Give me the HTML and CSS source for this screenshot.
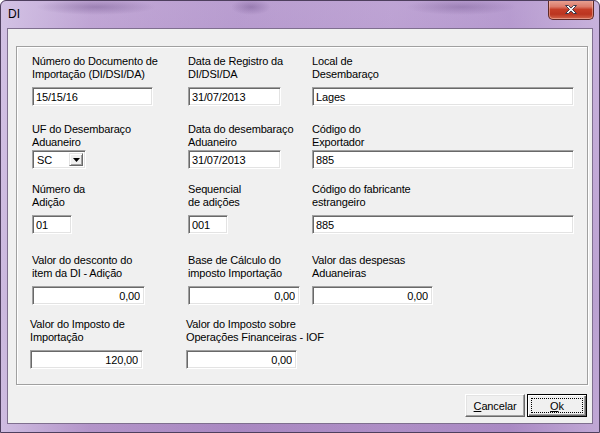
FILE: index.html
```html
<!DOCTYPE html>
<html lang="pt">
	<head>
		<meta charset="UTF-8" />
		<title>DI</title>
		<link rel="stylesheet" href="styles.css">
	</head>
	<body>
		<div class="window">
			<div class="titlebar">
				<span class="title">DI</span>
				<button class="close-btn" title="Fechar">
					<svg width="14" height="11" viewBox="0 0 14 11">
						<path d="M1.5 1.5h3l2.5 2.6 2.5-2.6h3l-4 4 4 4h-3l-2.5-2.6-2.5 2.6h-3l4-4z" fill="#fff" stroke="#3a3a4a" stroke-width="1" stroke-linejoin="round" />
					</svg>
				</button>
			</div>

			<div class="client">
				<div class="group">
					<div class="row row-1">
						<div class="field col-1">
							<label>Número do Documento de<br />Importação (DI/DSI/DA)</label>
							<input type="text" class="w-121" value="15/15/16" />
						</div>
						<div class="field col-2">
							<label>Data de Registro da<br />DI/DSI/DA</label>
							<input type="text" class="w-93" value="31/07/2013" />
						</div>
						<div class="field col-3">
							<label>Local de<br />Desembaraço</label>
							<input type="text" class="w-262" value="Lages" />
						</div>
					</div>

					<div class="row row-2">
						<div class="field col-1">
							<label>UF do Desembaraço<br />Aduaneiro</label>
							<div class="combo">
								<span class="combo-value">SC</span>
								<span class="combo-btn">
									<svg width="7" height="4" viewBox="0 0 7 4"><path d="M0 0h7L3.5 4z" fill="#000" /></svg>
								</span>
							</div>
						</div>
						<div class="field col-2">
							<label>Data do desembaraço<br />Aduaneiro</label>
							<input type="text" class="w-93" value="31/07/2013" />
						</div>
						<div class="field col-3">
							<label>Código do<br />Exportador</label>
							<input type="text" class="w-262" value="885" />
						</div>
					</div>

					<div class="row row-3">
						<div class="field col-1">
							<label>Número da<br />Adição</label>
							<input type="text" class="w-40" value="01" />
						</div>
						<div class="field col-2">
							<label>Sequencial<br />de adições</label>
							<input type="text" class="w-40" value="001" />
						</div>
						<div class="field col-3">
							<label>Código do fabricante<br />estrangeiro</label>
							<input type="text" class="w-262" value="885" />
						</div>
					</div>

					<div class="row row-4">
						<div class="field col-1">
							<label>Valor do desconto do<br />item da DI - Adição</label>
							<input type="text" class="w-113 num" value="0,00" />
						</div>
						<div class="field col-2">
							<label>Base de Cálculo do<br />imposto Importação</label>
							<input type="text" class="w-112 num" value="0,00" />
						</div>
						<div class="field col-3">
							<label>Valor das despesas<br />Aduaneiras</label>
							<input type="text" class="w-121 num" value="0,00" />
						</div>
					</div>

					<div class="row row-5">
						<div class="field col-1">
							<label>Valor do Imposto de<br />Importação</label>
							<input type="text" class="w-113 num" value="120,00" />
						</div>
						<div class="field col-2">
							<label>Valor do Imposto sobre<br />Operações Financeiras - IOF</label>
							<input type="text" class="w-111 num" value="0,00" />
						</div>
					</div>
				</div>

				<div class="actions">
					<button class="btn"><u>C</u>ancelar</button>
					<button class="btn default"><span class="focus"><u>O</u>k</span></button>
				</div>
			</div>
		</div>
	</body>
</html>
```

FILE: styles.css
```css
body {
	margin: 0;
	font-family: "Liberation Sans", Arial, sans-serif;
	font-size: 11px;
	letter-spacing: -0.15px;
	color: #000;
	background-color: #ffffff;
}
.window {
	width: 600px;
	height: 433px;
	box-sizing: border-box;
	border: 1px solid #4e3f5e;
	border-radius: 6px 6px 0 0;
	background-color: #ad8fc2;
	background-image:
		radial-gradient(ellipse 60px 8px at 95px 6px, rgba(90, 60, 120, 0.35), transparent),
		radial-gradient(ellipse 20px 8px at 250px 6px, rgba(90, 60, 120, 0.35), transparent),
		radial-gradient(ellipse 55px 8px at 460px 6px, rgba(90, 60, 120, 0.3), transparent),
		linear-gradient(
			to right,
			rgba(215, 200, 232, 0.8) 0%,
			rgba(190, 160, 212, 0.3) 15%,
			rgba(150, 110, 185, 0.2) 40%,
			rgba(175, 140, 205, 0.2) 65%,
			rgba(160, 125, 195, 0.3) 85%,
			rgba(205, 185, 225, 0.6) 100%
		),
		linear-gradient(to bottom, #c2aad6 0%, #b394c9 40%, #a282bb 70%, #ae8fc4 100%);
	overflow: hidden;
}
.titlebar {
	display: flex;
	align-items: flex-start;
	height: 27px;
}
.title {
	font-size: 12px;
	line-height: 15px;
	letter-spacing: 0;
	padding: 6px 0 0 7px;
	color: #000;
}
.close-btn {
	margin-left: auto;
	margin-right: 5px;
	margin-top: -1px;
	width: 46px;
	height: 20px;
	padding: 0;
	border: 1px solid #5e2a26;
	border-top: none;
	border-radius: 0 0 5px 5px;
	background: linear-gradient(
		to bottom,
		#e9a597 0%,
		#dc7b6a 35%,
		#c53d27 50%,
		#bb3520 75%,
		#d2654b 100%
	);
	box-shadow: inset 0 0 0 1px rgba(255, 210, 200, 0.45);
	display: flex;
	align-items: center;
	justify-content: center;
}
.client {
	margin: 0 6px;
	height: 396px;
	box-sizing: border-box;
	border: 1px solid #7f6f8f;
	background-color: #f0f0f0;
	padding-top: 17px;
}
.group {
	margin-left: 8px;
	width: 572px;
	height: 339px;
	box-sizing: border-box;
	border: 1px solid #a0a0a0;
	box-shadow: inset 1px 1px 0 #fff, 1px 1px 0 #fff;
	padding: 8px 0 0 15px;
}
.row {
	display: flex;
}
.row-2 {
	margin-top: 17px;
}
.row-3 {
	margin-top: 14px;
}
.row-4 {
	margin-top: 20px;
}
.row-5 {
	margin-top: 13px;
	margin-left: -2px;
}
.field {
	display: flex;
	flex-direction: column;
	align-items: flex-start;
}
.col-1 {
	width: 156px;
}
.col-2 {
	width: 124px;
}
.col-3 {
	flex: 1;
}
.field label {
	line-height: 13px;
	height: 26px;
	margin-bottom: 6px;
	white-space: nowrap;
}
.row-2 .field label {
	margin-bottom: 1px;
}
.field input {
	height: 19px;
	box-sizing: border-box;
	margin: 0;
	padding: 0 3px;
	font-family: inherit;
	font-size: 11px;
	letter-spacing: -0.15px;
	color: #000;
	background-color: #fff;
	border-style: solid;
	border-width: 1px;
	border-color: #a0a0a0 #fff #fff #a0a0a0;
	box-shadow: inset 1px 1px 0 #696969, inset -1px -1px 0 #e3e3e3;
	outline: none;
}
.field input.num {
	text-align: right;
	padding-right: 4px;
}
.w-40 {
	width: 40px;
}
.w-93 {
	width: 93px;
}
.w-111 {
	width: 111px;
}
.w-112 {
	width: 112px;
}
.w-113 {
	width: 113px;
}
.w-121 {
	width: 121px;
}
.w-262 {
	width: 262px;
}
.combo {
	width: 54px;
	height: 19px;
	box-sizing: border-box;
	display: flex;
	align-items: center;
	background-color: #fff;
	border-style: solid;
	border-width: 1px;
	border-color: #a0a0a0 #fff #fff #a0a0a0;
	box-shadow: inset 1px 1px 0 #696969, inset -1px -1px 0 #e3e3e3;
	padding: 2px 2px 2px 4px;
}
.combo-value {
	flex: 1;
}
.combo-btn {
	width: 14px;
	height: 13px;
	box-sizing: border-box;
	display: flex;
	align-items: center;
	justify-content: center;
	background-color: #f0f0f0;
	border-style: solid;
	border-width: 1px;
	border-color: #e3e3e3 #696969 #696969 #e3e3e3;
	box-shadow: inset 1px 1px 0 #fff, inset -1px -1px 0 #a0a0a0;
}
.actions {
	display: flex;
	justify-content: flex-end;
	gap: 2px;
	margin-top: 9px;
	padding-right: 5px;
}
.btn {
	width: 60px;
	height: 23px;
	box-sizing: border-box;
	margin: 0;
	padding: 0;
	font-family: inherit;
	font-size: 11px;
	letter-spacing: -0.15px;
	color: #000;
	background-color: #f0f0f0;
	border-style: solid;
	border-width: 1px;
	border-color: #fff #696969 #696969 #fff;
	box-shadow: inset -1px -1px 0 #a0a0a0, inset 1px 1px 0 #e3e3e3;
}
.btn.default {
	border: 1px solid #000;
	box-shadow: inset 1px 1px 0 #fff, inset -1px -1px 0 #696969, inset -2px -2px 0 #a0a0a0;
	padding: 3px;
}
.btn .focus {
	display: flex;
	align-items: center;
	justify-content: center;
	height: 100%;
	box-sizing: border-box;
	border: 1px dotted #000;
}
```
